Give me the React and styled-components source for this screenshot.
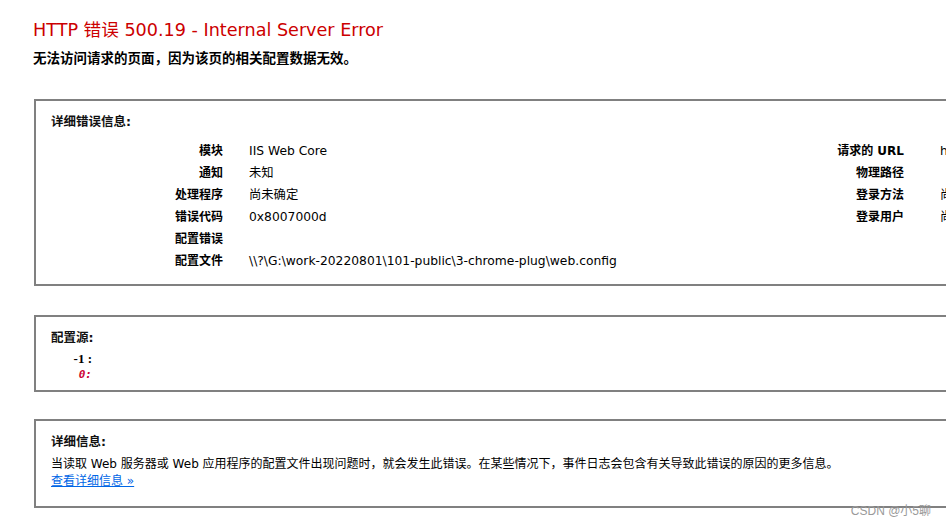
import React from 'react'
import styled, { createGlobalStyle } from 'styled-components'

const GlobalStyle = createGlobalStyle`
  html, body {
    margin: 0;
    padding: 0;
    background: #FFFFFF;
    overflow: hidden;
  }
  body {
    font-family: "DejaVu Sans", Verdana, "Noto Sans CJK SC", sans-serif;
    font-size: 12px;
    color: #000000;
  }
`

const Page = styled.div`
  position: relative;
  width: 946px;
  height: 525px;
  overflow: hidden;
  padding: 19px 0 0 33px;
  box-sizing: border-box;
`

const Title = styled.h2`
  margin: 0;
  font-size: 17.6px;
  font-weight: normal;
  line-height: 22px;
  color: #CC0000;
  white-space: nowrap;
`

const SubTitle = styled.h3`
  margin: 8px 0 0 0;
  font-size: 13.5px;
  font-weight: bold;
  line-height: 18px;
  color: #000000;
`

const Panel = styled.div`
  width: 1100px;
  margin: ${p => p.$top}px 0 0 1px;
  height: ${p => p.$height}px;
  border: 2px solid #808080;
  padding: 12px 15px 0 15px;
  box-sizing: border-box;
  background: #FFFFFF;
`

const Legend = styled.div`
  font-size: 12.5px;
  font-weight: bold;
  color: #111111;
  line-height: 18px;
`

const Details = styled.div`
  display: flex;
  margin-top: 11px;
`

const Table = styled.div`
  display: grid;
  grid-template-columns: ${p => p.$label}px auto;
  column-gap: ${p => p.$gap}px;
  grid-auto-rows: 22px;
  width: ${p => p.$width}px;
  align-content: start;
`

const Label = styled.div`
  text-align: right;
  font-weight: bold;
  white-space: nowrap;
  line-height: 18px;
`

const Value = styled.div`
  white-space: nowrap;
  line-height: 18px;
  font-size: 12.3px;
`

const Code = styled.pre`
  margin: 4px 0 0 18px;
  font-family: "Liberation Serif", "Noto Sans CJK SC", serif;
  font-size: 13px;
  line-height: 16px;
`

const CodeLine = styled.div`
  width: 23px;
  text-align: right;
  font-weight: bold;
  color: ${p => (p.$error ? '#CC0033' : '#000000')};
  font-style: ${p => (p.$error ? 'italic' : 'normal')};
  font-family: ${p => (p.$error ? '"DejaVu Sans Mono", monospace' : 'inherit')};
  font-size: ${p => (p.$error ? '11px' : '13px')};
`

const Text = styled.p`
  margin: 5px 0 0 0;
  line-height: 17px;
  white-space: nowrap;
`

const MoreLink = styled.a`
  display: inline-block;
  color: #0066E6;
  font-weight: normal;
  text-decoration: underline;
  line-height: 16px;
  cursor: pointer;
`

const Watermark = styled.div`
  position: absolute;
  right: 15px;
  bottom: 7px;
  font-family: "Liberation Sans", "Noto Sans CJK SC", sans-serif;
  font-size: 12px;
  color: #9a9a9a;
`

const leftRows = [
  ['模块', 'IIS Web Core'],
  ['通知', '未知'],
  ['处理程序', '尚未确定'],
  ['错误代码', '0x8007000d'],
  ['配置错误', ''],
  ['配置文件', '\\\\?\\G:\\work-20220801\\101-public\\3-chrome-plug\\web.config'],
]

const rightRows = [
  ['请求的 URL', 'http://localhost:80/'],
  ['物理路径', ''],
  ['登录方法', '尚未确定'],
  ['登录用户', '尚未确定'],
]

const App = () => {
  return (
    <>
      <GlobalStyle />
      <Page>
        <Title>HTTP 错误 500.19 - Internal Server Error</Title>
        <SubTitle>无法访问请求的页面，因为该页的相关配置数据无效。</SubTitle>

        <Panel $top={32} $height={187}>
          <Legend>详细错误信息:</Legend>
          <Details>
            <Table $label={172} $gap={26} $width={600}>
              {leftRows.map(([k, v]) => (
                <React.Fragment key={k}>
                  <Label>{k}</Label>
                  <Value>{v}</Value>
                </React.Fragment>
              ))}
            </Table>
            <Table $label={253} $gap={36} $width={420}>
              {rightRows.map(([k, v]) => (
                <React.Fragment key={k}>
                  <Label>{k}</Label>
                  <Value>{v}</Value>
                </React.Fragment>
              ))}
            </Table>
          </Details>
        </Panel>

        <Panel $top={29} $height={77}>
          <Legend>配置源:</Legend>
          <Code>
            <CodeLine>-1 :</CodeLine>
            <CodeLine $error>0:</CodeLine>
          </Code>
        </Panel>

        <Panel $top={27} $height={89}>
          <Legend>详细信息:</Legend>
          <Text>
            当读取 Web 服务器或 Web 应用程序的配置文件出现问题时，就会发生此错误。在某些情况下，事件日志会包含有关导致此错误的原因的更多信息。
          </Text>
          <MoreLink>查看详细信息 »</MoreLink>
        </Panel>

        <Watermark>CSDN @小5聊</Watermark>
      </Page>
    </>
  )
}

export default App
